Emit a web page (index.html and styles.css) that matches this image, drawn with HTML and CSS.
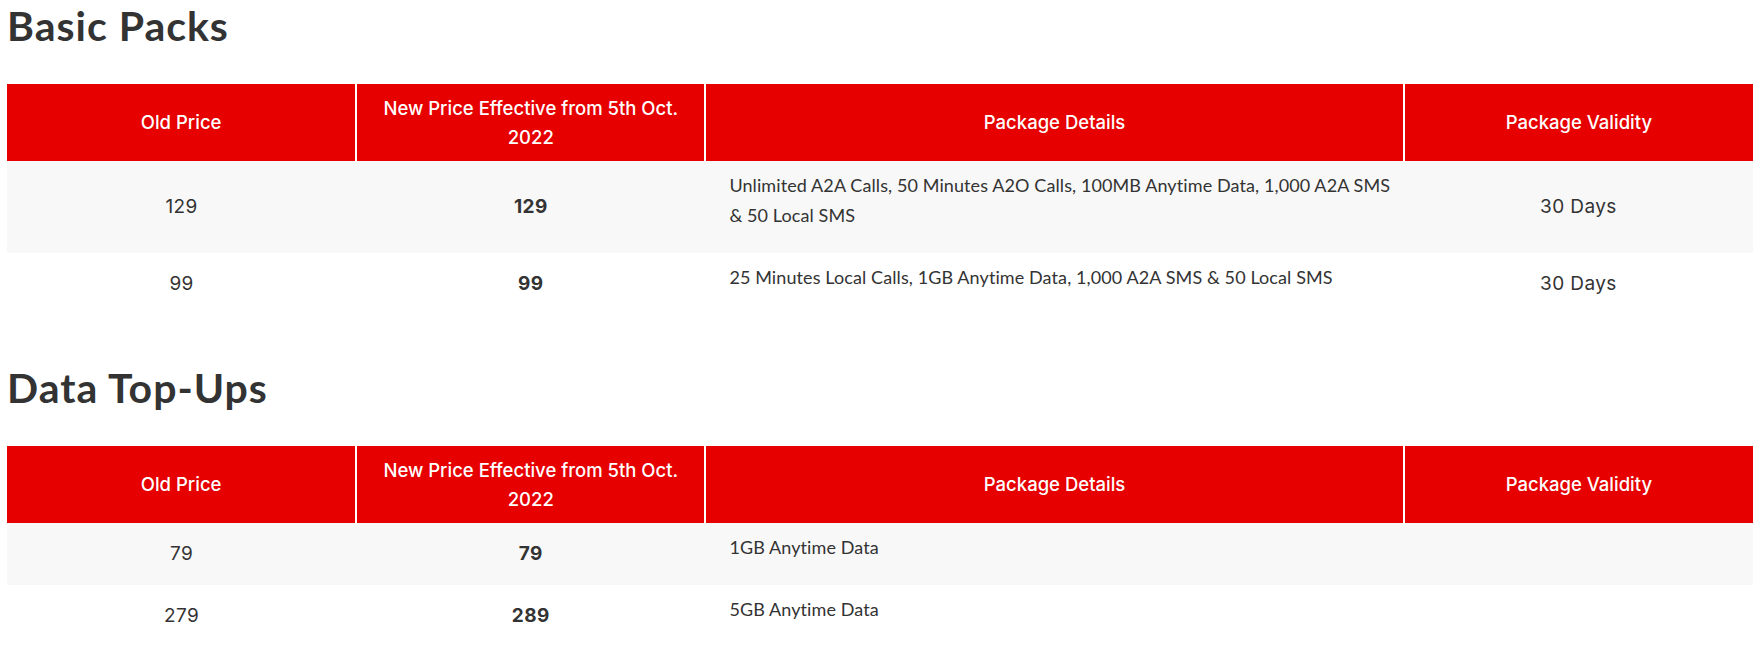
FILE: index.html
```html
<!DOCTYPE html>
<html lang="en">
<head>
<meta charset="utf-8">
<title>Packs</title>
<link rel="stylesheet" href="styles.css">
</head>
<body>
<main class="page">
  <section class="pack-section">
    <h2 class="section-title">Basic Packs</h2>
    <table class="price-table">
      <colgroup>
        <col class="col-narrow"><col class="col-narrow"><col class="col-wide"><col class="col-narrow">
      </colgroup>
      <thead>
        <tr>
          <th>Old Price</th>
          <th>New Price Effective from 5th Oct. 2022</th>
          <th>Package Details</th>
          <th>Package Validity</th>
        </tr>
      </thead>
      <tbody>
        <tr>
          <td class="val">129</td>
          <td class="val new">129</td>
          <td class="details"><p>Unlimited A2A Calls, 50 Minutes A2O Calls, 100MB Anytime Data, 1,000 A2A SMS &amp; 50 Local SMS</p></td>
          <td class="val">30 Days</td>
        </tr>
        <tr>
          <td class="val">99</td>
          <td class="val new">99</td>
          <td class="details"><p>25 Minutes Local Calls, 1GB Anytime Data, 1,000 A2A SMS &amp; 50 Local SMS</p></td>
          <td class="val">30 Days</td>
        </tr>
      </tbody>
    </table>
  </section>
  <section class="pack-section">
    <h2 class="section-title">Data Top-Ups</h2>
    <table class="price-table">
      <colgroup>
        <col class="col-narrow"><col class="col-narrow"><col class="col-wide"><col class="col-narrow">
      </colgroup>
      <thead>
        <tr>
          <th>Old Price</th>
          <th>New Price Effective from 5th Oct. 2022</th>
          <th>Package Details</th>
          <th>Package Validity</th>
        </tr>
      </thead>
      <tbody>
        <tr>
          <td class="val">79</td>
          <td class="val new">79</td>
          <td class="details"><p>1GB Anytime Data</p></td>
          <td class="val"></td>
        </tr>
        <tr>
          <td class="val">279</td>
          <td class="val new">289</td>
          <td class="details"><p>5GB Anytime Data</p></td>
          <td class="val"></td>
        </tr>
      </tbody>
    </table>
  </section>
</main>
</body>
</html>
```
FILE: styles.css
```css
html, body {
  margin: 0;
  padding: 0;
  background: #ffffff;
}

body {
  font-family: Inter, "Open Sans", sans-serif;
  color: #333333;
}

.page {
  padding: 2px 11px 0 7px;
}

.pack-section + .pack-section {
  margin-top: 49px;
}

.section-title {
  margin: 0 0 34px 0;
  font-family: Lato, "Open Sans", sans-serif;
  font-size: 41px;
  line-height: 48px;
  font-weight: 700;
  letter-spacing: 1px;
  color: #333333;
}

.price-table {
  width: 1746px;
  border-collapse: collapse;
  table-layout: fixed;
}

.col-narrow { width: 20%; }
.col-wide { width: 40%; }

.price-table th {
  background: #e60000;
  color: #ffffff;
  font-family: Inter, "Open Sans", sans-serif;
  font-size: 18.5px;
  font-weight: 500;
  line-height: 29px;
  padding: 9px 9px;
  height: 77px;
  box-sizing: border-box;
  border-left: 2px solid #ffffff;
  text-align: center;
  vertical-align: middle;
}

.price-table th:first-child {
  border-left: 0;
}

.price-table tbody tr:nth-child(odd) {
  background: #f8f8f8;
}

.price-table td {
  padding: 9px 9px;
  vertical-align: middle;
}

.val {
  text-align: center;
  font-family: Inter, "Open Sans", sans-serif;
  font-size: 19px;
  line-height: 30px;
  letter-spacing: 0.4px;
  color: #333333;
}

.val.new {
  font-weight: 700;
}

.price-table td.details {
  text-align: left;
  padding: 9px 8px 9px 24px;
  vertical-align: top;
}

.details p {
  margin: 0 0 14px 0;
  font-family: Lato, "Open Sans", sans-serif;
  font-size: 18px;
  line-height: 30px;
  letter-spacing: 0.1px;
  color: #333333;
}
```
